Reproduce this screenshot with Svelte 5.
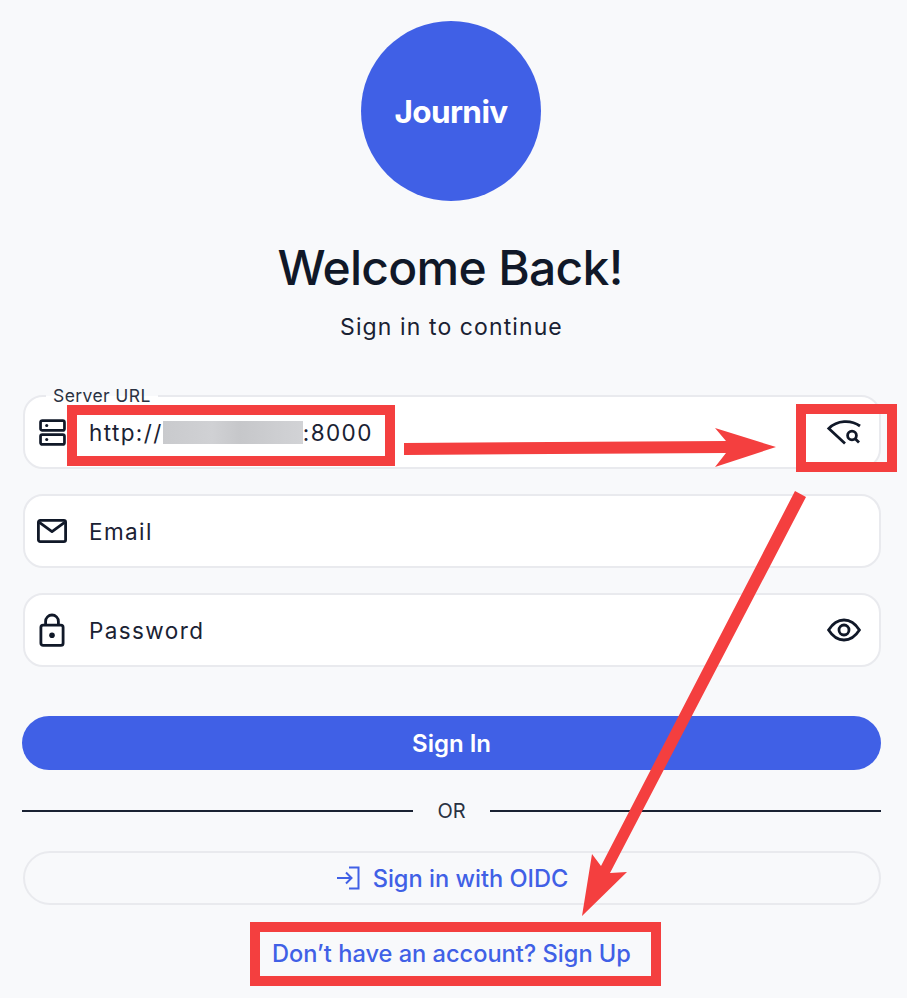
<script>
  const fields = [
    { key: 'server', label: 'Server URL', prefix: 'http://', suffix: ':8000', trailing: 'search' },
    { key: 'email', placeholder: 'Email' },
    { key: 'password', placeholder: 'Password', trailing: 'eye' }
  ];
</script>

{#snippet fieldIcon(key)}
  {#if key === 'server'}
    <svg class="icon-server" viewBox="0 0 28 28" fill="none" stroke="currentColor" stroke-width="2.8">
      <rect x="1.6" y="1.6" width="24.8" height="10.2" rx="1.8" />
      <rect x="1.6" y="16.2" width="24.8" height="10.2" rx="1.8" />
      <circle cx="8" cy="6.7" r="1.6" fill="currentColor" stroke="none" />
      <circle cx="8" cy="21.3" r="1.6" fill="currentColor" stroke="none" />
    </svg>
  {:else if key === 'email'}
    <svg class="icon-mail" viewBox="0 0 30 24" fill="none" stroke="currentColor" stroke-width="2.8" stroke-linejoin="round">
      <rect x="1.4" y="1.4" width="27.2" height="21.2" rx="1.8" />
      <path d="M2.4 3.4 L15 12.6 L27.6 3.4" />
    </svg>
  {:else}
    <svg class="icon-lock" viewBox="0 0 30 34" fill="none" stroke="currentColor" stroke-width="2.8" stroke-linejoin="round">
      <rect x="3.9" y="12.2" width="22.2" height="20.2" rx="2.2" />
      <path d="M8.6 12 V8.4 A6.4 6.4 0 0 1 21.4 8.4 V12" />
      <circle cx="15" cy="22.2" r="2.8" fill="currentColor" stroke="none" />
    </svg>
  {/if}
{/snippet}

<main class="page">
  <div class="logo">Journiv</div>
  <h1>Welcome Back!</h1>
  <p class="subtitle">Sign in to continue</p>

  <form class="fields">
    {#each fields as field}
      <div class="field">
        {#if field.label}<span class="legend">{field.label}</span>{/if}
        <span class="lead">{@render fieldIcon(field.key)}</span>
        {#if field.prefix}
          <span class="value">{field.prefix}<span class="blur"></span>{field.suffix}</span>
        {:else}
          <span class="value">{field.placeholder}</span>
        {/if}
        {#if field.trailing === 'eye'}
          <svg class="trail" viewBox="0 0 34 24" fill="none" stroke="currentColor" stroke-width="2.8">
            <path d="M1.6 12 C6 5 11 2 17 2 C23 2 28 5 32.4 12 C28 19 23 22 17 22 C11 22 6 19 1.6 12 Z" />
            <circle cx="17" cy="12" r="5" />
          </svg>
        {:else if field.trailing === 'search'}
          <svg class="trail" viewBox="0 0 34 24" fill="none" stroke="currentColor" stroke-width="2.8">
            <path d="M18 23.5 L1.8 8.5 C10 0 24 -0.5 33 6" />
            <circle cx="25" cy="15.5" r="4.4" />
            <path d="M28.2 18.8 L32 22.6" />
          </svg>
        {/if}
      </div>
    {/each}
  </form>

  <button class="primary" type="button">Sign In</button>

  <div class="divider"><span>OR</span></div>

  <button class="outline" type="button">
    <svg viewBox="0 0 24 24" fill="none" stroke="currentColor" stroke-width="2">
      <path d="M1 12 H15 M10 6.5 L15.5 12 L10 17.5" />
      <path d="M13 1.5 H22.5 V22.5 H13" />
    </svg>
    Sign in with OIDC
  </button>

  <a class="signup" href="#signup">Don’t have an account? Sign Up</a>

  <!-- annotations drawn over the screenshot -->
  <span class="mark mark-url"></span>
  <span class="mark mark-toggle"></span>
  <span class="mark mark-signup"></span>
  <svg class="arrows" viewBox="0 0 907 998" fill="#f43f3f">
    <path d="M404 443 L726 441 L715 428 L776 447 L715 467 L726 453 L404 455 Z" />
    <path d="M795 491 L806 497 L610 873 L627 872 L582 916 L592 854 L601 866 Z" />
  </svg>
</main>

<style>
  :global(body) {
    margin: 0;
    background: #f8f9fb;
  }

  .page {
    position: relative;
    box-sizing: border-box;
    width: 907px;
    height: 998px;
    padding: 21px 26px 0 22px;
    display: flex;
    flex-direction: column;
    align-items: center;
    font-family: Inter, "Noto Sans", sans-serif;
    color: #101828;
    overflow: hidden;
  }

  .logo {
    width: 180px;
    height: 180px;
    margin-right: 1px;
    flex-shrink: 0;
    border-radius: 50%;
    background: #4060e6;
    color: #fff;
    font-size: 31.5px;
    font-weight: 700;
    letter-spacing: -0.6px;
    display: flex;
    align-items: center;
    justify-content: center;
  }

  h1 {
    margin: 36px 3px 0 0;
    font-size: 48px;
    line-height: 62px;
    font-weight: 500;
    letter-spacing: -0.7px;
  }

  .subtitle {
    margin: 13px 0 0;
    font-size: 23px;
    line-height: 30px;
    letter-spacing: 1.1px;
    color: #1a2233;
  }

  .fields {
    align-self: stretch;
    margin: 53px 0 0 1px;
    display: flex;
    flex-direction: column;
    gap: 25px;
  }

  .field {
    position: relative;
    box-sizing: border-box;
    height: 74px;
    padding: 0 18px 0 12px;
    display: flex;
    align-items: center;
    background: #fff;
    border: 2px solid #e9eaee;
    border-radius: 20px;
  }

  .legend {
    position: absolute;
    left: 21px;
    top: -11px;
    padding: 0 7px;
    background: linear-gradient(#f8f9fb 50%, #fff 50%);
    font-size: 17.5px;
    line-height: 20px;
    letter-spacing: 0.4px;
    color: #2a3242;
  }

  .lead {
    width: 30px;
    display: flex;
    justify-content: center;
    flex-shrink: 0;
  }

  .lead svg {
    overflow: visible;
    display: block;
  }

  .icon-server {
    width: 27px;
    height: 27px;
  }

  .icon-mail {
    width: 30px;
    height: 24px;
  }

  .icon-lock {
    width: 30px;
    height: 34px;
  }

  .value {
    margin-left: 22px;
    flex: 1;
    font-size: 22.5px;
    letter-spacing: 1.4px;
    display: flex;
    align-items: center;
    color: #1a2233;
  }

  .blur {
    width: 140px;
    height: 23px;
    background: linear-gradient(90deg, #c9cacd, #d0d1d4 35%, #c6c7ca 55%, #d2d3d6);
  }

  .trail {
    width: 34px;
    height: 24px;
    overflow: visible;
    flex-shrink: 0;
    color: #101828;
  }

  .primary {
    align-self: stretch;
    height: 54px;
    margin-top: 49px;
    border: 0;
    border-radius: 27px;
    background: #4060e6;
    color: #fff;
    font: 600 24px Inter, "Noto Sans", sans-serif;
  }

  .divider {
    align-self: stretch;
    margin-top: 28px;
    height: 26px;
    display: flex;
    align-items: center;
    gap: 24px;
    font-size: 20px;
    color: #2a3242;
  }

  .divider::before,
  .divider::after {
    content: "";
    flex: 1;
    height: 1.5px;
    background: #1a2233;
  }

  .outline {
    align-self: stretch;
    height: 54px;
    margin: 27px 0 0 1px;
    border: 2px solid #e9eaee;
    border-radius: 27px;
    background: transparent;
    color: #4060e6;
    font: 500 23.6px Inter, "Noto Sans", sans-serif;
    display: flex;
    align-items: center;
    justify-content: center;
    gap: 13px;
  }

  .outline svg {
    width: 24px;
    height: 24px;
  }

  .signup {
    margin-top: 33px;
    color: #4060e6;
    font-size: 23.6px;
    line-height: 32px;
    font-weight: 500;
    text-decoration: none;
  }

  .mark {
    position: absolute;
    box-sizing: border-box;
    border: 10px solid #f43f3f;
  }

  .mark-url {
    left: 67px;
    top: 405px;
    width: 328px;
    height: 61px;
  }

  .mark-toggle {
    left: 796px;
    top: 404px;
    width: 101px;
    height: 68px;
  }

  .mark-signup {
    left: 250px;
    top: 922px;
    width: 411px;
    height: 64px;
  }

  .arrows {
    position: absolute;
    inset: 0;
    width: 907px;
    height: 998px;
    pointer-events: none;
  }
</style>
